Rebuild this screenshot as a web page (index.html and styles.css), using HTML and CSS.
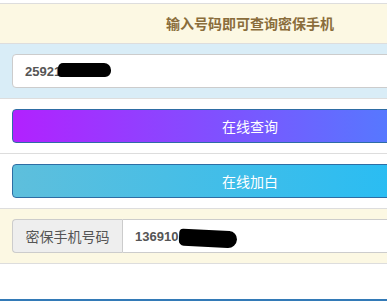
FILE: index.html
```html
<!DOCTYPE html>
<html lang="zh">
<head>
<meta charset="utf-8">
<link rel="stylesheet" href="styles.css">
</head>
<body>
<div class="wrap">
  <div class="row row-head">输入号码即可查询密保手机</div>
  <div class="row row-info">
    <div class="field">
      <span class="val">259210<span class="blot blot-a"></span></span>
    </div>
  </div>
  <div class="row row-plain">
    <button class="btn btn-query">在线查询</button>
  </div>
  <div class="row row-plain">
    <button class="btn btn-white">在线加白</button>
  </div>
  <div class="row row-warn">
    <div class="group">
      <span class="addon">密保手机号码</span>
      <div class="field field-join">
        <span class="val">136910<span class="blot blot-b"></span></span>
      </div>
    </div>
  </div>
  <div class="foot"></div>
</div>
</body>
</html>
```
FILE: styles.css
```css
html, body {
  margin: 0;
  padding: 0;
  overflow: hidden;
  background: #fff;
}
body {
  font-family: "Liberation Sans", "Noto Sans CJK SC", sans-serif;
  font-size: 14px;
  color: #555;
}
.wrap {
  width: 500px;
  padding-top: 3px;
}
.row {
  border-top: 1px solid #ddd;
  padding: 10px 12px;
}
.row-head {
  background: #fcf8e3;
  color: #8a6d3b;
  font-weight: bold;
  text-align: center;
  font-family: "Noto Sans CJK SC", sans-serif;
  height: 40px;
  box-sizing: border-box;
  padding: 0;
  line-height: 38px;
  font-size: 14px;
}
.row-info {
  background: #d9edf7;
}
.row-warn {
  background: #fcf8e3;
}
.row-info, .row-plain, .row-warn {
  height: 55px;
  box-sizing: border-box;
}
.field {
  height: 34px;
  box-sizing: border-box;
  border: 1px solid #ccc;
  border-radius: 4px;
  background: #fff;
  display: flex;
  align-items: center;
  padding: 0 12px;
}
.val {
  position: relative;
  font-weight: bold;
  font-size: 13px;
  color: #555;
}
.blot {
  position: absolute;
  background: #000;
}
.blot-a {
  left: 33px;
  top: -1px;
  width: 53px;
  height: 14px;
  border-radius: 5px 7px 6px 3px;
}
.blot-b {
  left: 44px;
  top: 1px;
  width: 58px;
  height: 17px;
  border-radius: 4px 8px 9px 5px;
  transform: rotate(3deg);
}
.btn {
  display: block;
  width: 100%;
  height: 34px;
  border: 1px solid #2e6da4;
  border-radius: 4px;
  color: #fff;
  font-size: 14px;
  font-family: "Noto Sans CJK SC", sans-serif;
  padding: 0;
}
.btn-query {
  background: linear-gradient(to right, #b221ff, #3e8fff);
}
.btn-white {
  background: linear-gradient(to right, #5ebfdc, #1dbcf8);
}
.group {
  display: flex;
  height: 34px;
}
.addon {
  width: 110px;
  box-sizing: border-box;
  background: #eee;
  border: 1px solid #ccc;
  border-right: 0;
  border-radius: 4px 0 0 4px;
  display: flex;
  align-items: center;
  justify-content: center;
  font-family: "Noto Sans CJK SC", sans-serif;
  font-size: 14px;
  color: #555;
}
.field-join {
  flex: 1;
  border-radius: 0 4px 4px 0;
}
.foot {
  height: 35px;
  border-top: 1px solid #ddd;
  border-bottom: 2px solid #337ab7;
}
```
